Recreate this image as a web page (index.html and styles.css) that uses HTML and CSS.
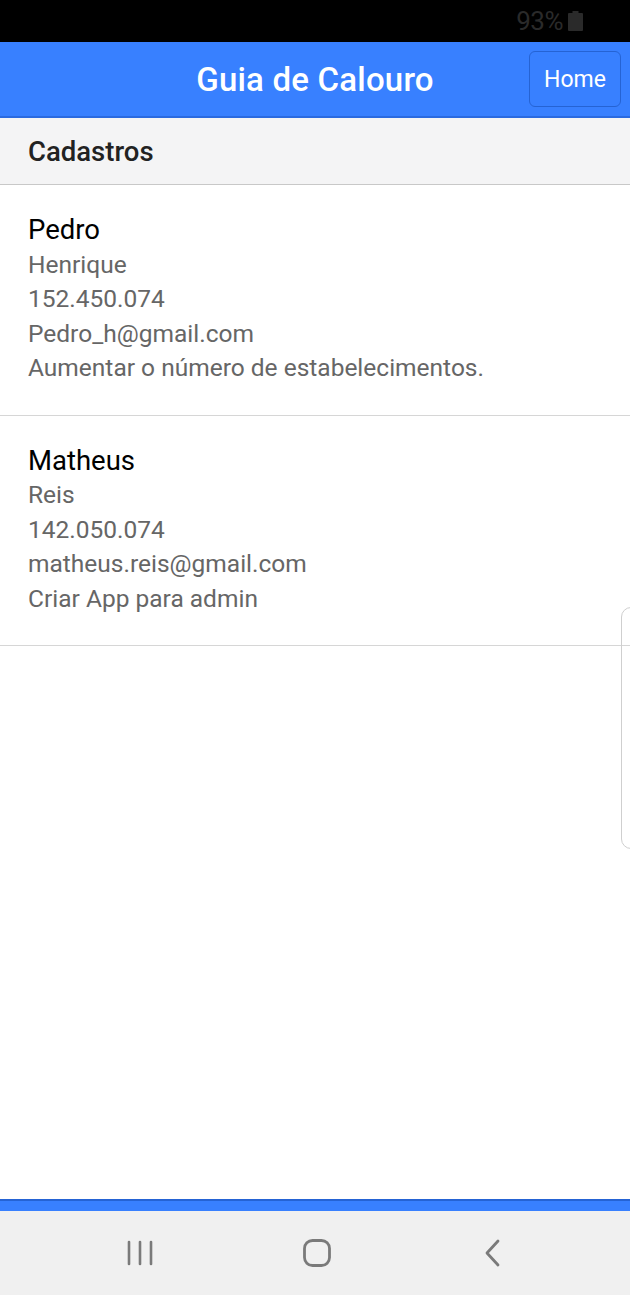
FILE: index.html
```html
<!DOCTYPE html>
<html lang="pt">
<head>
<meta charset="utf-8">
<title>Guia de Calouro</title>
<link rel="stylesheet" href="styles.css">
</head>
<body>
<div class="app">
  <div class="status-bar">
    <span class="battery-text">93%</span>
    <svg class="battery" width="15" height="20" viewBox="0 0 15 20"><rect x="4.5" y="0" width="6" height="3" fill="#2a2a2a"/><rect x="0" y="2" width="15" height="18" rx="1" fill="#2a2a2a"/></svg>
  </div>
  <header class="toolbar">
    <h1 class="title">Guia de Calouro</h1>
    <button class="home-btn">Home</button>
  </header>
  <main class="content">
    <div class="list-header">Cadastros</div>
    <div class="item">
      <div class="name">Pedro</div>
      <div class="line">Henrique</div>
      <div class="line">152.450.074</div>
      <div class="line">Pedro_h@gmail.com</div>
      <div class="line">Aumentar o número de estabelecimentos.</div>
    </div>
    <div class="item">
      <div class="name">Matheus</div>
      <div class="line">Reis</div>
      <div class="line">142.050.074</div>
      <div class="line">matheus.reis@gmail.com</div>
      <div class="line">Criar App para admin</div>
    </div>
    <div class="edge-handle"></div>
  </main>
  <footer class="footer-bar"></footer>
  <nav class="nav-bar">
    <svg class="nav-icon" width="30" height="30" viewBox="0 0 30 30"><g stroke="#7a7a7a" stroke-width="2.6" stroke-linecap="round"><line x1="4" y1="4" x2="4" y2="26"/><line x1="15" y1="4" x2="15" y2="26"/><line x1="26" y1="4" x2="26" y2="26"/></g></svg>
    <svg class="nav-icon" width="30" height="30" viewBox="0 0 30 30"><rect x="2.5" y="2.5" width="25" height="25" rx="8" fill="none" stroke="#7a7a7a" stroke-width="2.8"/></svg>
    <svg class="nav-icon" width="30" height="30" viewBox="0 0 30 30"><polyline points="20,3 9,15 20,27" fill="none" stroke="#7a7a7a" stroke-width="2.8" stroke-linecap="round" stroke-linejoin="round"/></svg>
  </nav>
</div>
</body>
</html>
```

FILE: styles.css
```css
* { box-sizing: border-box; }
html, body { margin: 0; padding: 0; }
body {
  font-family: Roboto, "Noto Sans", "Liberation Sans", sans-serif;
  background: #fff;
}
.app {
  width: 630px;
  height: 1295px;
  display: flex;
  flex-direction: column;
  overflow: hidden;
}
.status-bar {
  height: 42px;
  background: #000;
  display: flex;
  align-items: center;
  justify-content: flex-end;
  padding-right: 47px;
  gap: 5px;
  flex: none;
}
.battery-text {
  color: #2a2a2a;
  font-size: 26px;
  letter-spacing: -0.5px;
}
.battery { display: block; margin-top: 0; }
.toolbar {
  height: 76px;
  flex: none;
  background: #3880ff;
  border-bottom: 2px solid #2a6ae0;
  display: flex;
  align-items: center;
  justify-content: center;
  position: relative;
}
.title {
  margin: 0;
  color: #fff;
  font-size: 33px;
  font-weight: 500;
  letter-spacing: 0.2px;
}
.home-btn {
  position: absolute;
  right: 9px;
  top: 9px;
  width: 92px;
  height: 56px;
  background: #3880ff;
  border: 1.5px solid #2563d4;
  border-radius: 6px;
  color: #fff;
  font-family: inherit;
  font-size: 23px;
  padding: 0;
}
.content {
  flex: 1;
  position: relative;
  background: #fff;
}
.list-header {
  height: 67px;
  background: #f4f4f5;
  border-bottom: 1px solid #c8c8c8;
  padding-left: 28px;
  display: flex;
  align-items: center;
  font-size: 27.5px;
  font-weight: 500;
  color: #222;
}
.item {
  padding: 28px 28px 29px;
  border-bottom: 1px solid #d6d6d6;
}
.name {
  font-size: 27.5px;
  line-height: 34.5px;
  color: #000;
}
.line {
  font-size: 24.5px;
  line-height: 34.5px;
  color: #666;
}
.edge-handle {
  position: absolute;
  right: -12px;
  top: 489px;
  width: 21px;
  height: 242px;
  border: 1.5px solid #cfcfcf;
  border-radius: 10px;
  background: transparent;
}
.footer-bar {
  height: 12px;
  flex: none;
  background: #3880ff;
  border-top: 2px solid #2563d4;
}
.nav-bar {
  height: 84px;
  flex: none;
  background: #f0f0f0;
  display: flex;
  align-items: center;
  justify-content: space-between;
  padding: 0 122px 0 125px;
}
.nav-icon { display: block; }
```
